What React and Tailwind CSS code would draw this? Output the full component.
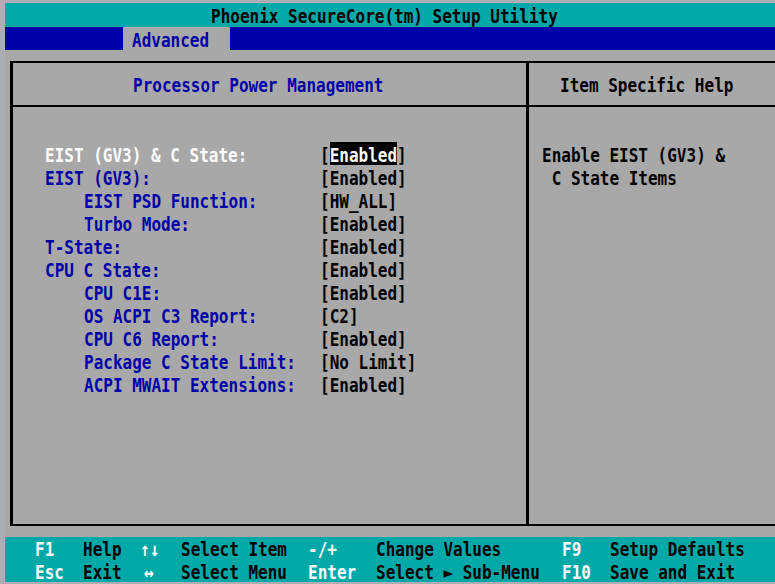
import React from 'react';

const items = [
  { label: 'EIST (GV3) & C State:', value: 'Enabled', sub: false, selected: true },
  { label: 'EIST (GV3):', value: 'Enabled', sub: false },
  { label: 'EIST PSD Function:', value: 'HW_ALL', sub: true },
  { label: 'Turbo Mode:', value: 'Enabled', sub: true },
  { label: 'T-State:', value: 'Enabled', sub: false },
  { label: 'CPU C State:', value: 'Enabled', sub: false },
  { label: 'CPU C1E:', value: 'Enabled', sub: true },
  { label: 'OS ACPI C3 Report:', value: 'C2', sub: true },
  { label: 'CPU C6 Report:', value: 'Enabled', sub: true },
  { label: 'Package C State Limit:', value: 'No Limit', sub: true },
  { label: 'ACPI MWAIT Extensions:', value: 'Enabled', sub: true },
];

// text cell, stretched vertically like the VGA text mode font
function T({ children, className = '' }) {
  return (
    <span className={`inline-block whitespace-pre scale-y-[1.2] translate-y-[2px] ${className}`}>{children}</span>
  );
}

function SettingRow({ label, value, sub, selected }) {
  return (
    <div className="flex h-[23px] items-center">
      <div className={`w-[275px] shrink-0 ${sub ? 'pl-[39px]' : ''}`}>
        <T className={selected ? 'text-[#fcfcfc]' : 'text-[#0000a8]'}>{label}</T>
      </div>
      <div className="flex h-full items-center text-black">
        <T>[</T>
        <span className={`flex h-full items-center ${selected ? 'bg-black text-[#fcfcfc]' : ''}`}>
          <T>{value}</T>
        </span>
        <T>]</T>
      </div>
    </div>
  );
}

function KeyRow({ cells }) {
  const widths = ['w-[48px]', 'w-[57px]', 'w-[41px]', 'w-[127px]', 'w-[68px]', 'w-[186px]', 'w-[48px]', 'flex-1'];
  return (
    <div className="flex h-[22.5px] items-center pl-[30px]">
      {cells.map((c, i) => (
        <div key={i} className={`${widths[i]} shrink-0 ${i % 2 === 0 ? 'text-[#fcfcfc]' : 'text-black'}`}>
          <T className={c.pad ? 'pl-[4px]' : ''}>{c.t}</T>
        </div>
      ))}
    </div>
  );
}

export default function App() {
  return (
    <div
      className="w-[775px] h-[584px] bg-[#abaeb4] pl-[5px] pt-[3px] pb-[2px] flex flex-col text-[16px] font-bold leading-none overflow-hidden"
      style={{ fontFamily: '"DejaVu Sans Mono", "Liberation Mono", monospace' }}
    >
      {/* title */}
      <div className="h-[24px] bg-[#00a8a8] flex items-center pl-[206px] text-black">
        <T>Phoenix SecureCore(tm) Setup Utility</T>
      </div>

      {/* menu bar */}
      <div className="h-[23px] bg-[#0000a8] flex">
        <div className="w-[118px]" />
        <div className="w-[107px] bg-[#a8a8a8] flex items-center pl-[9px] text-[#0000a8]">
          <T>Advanced</T>
        </div>
      </div>

      {/* main area */}
      <div className="flex-1 bg-[#a8a8a8] pt-[11px] pl-[5px]">
        <div className="h-[465px] border-l-[3px] border-t-2 border-b-2 border-black flex">
          <div className="w-[513px] flex flex-col">
            <div className="h-[44px] border-b-2 border-black flex items-center pl-[120px] text-[#0000a8]">
              <T>Processor Power Management</T>
            </div>
            <div className="pt-[35px] pl-[32px]">
              {items.map((it) => (
                <SettingRow key={it.label} {...it} />
              ))}
            </div>
          </div>
          <div className="w-[3px] bg-black" />
          <div className="flex-1 flex flex-col text-black">
            <div className="h-[44px] border-b-2 border-black flex items-center pl-[31px]">
              <T>Item Specific Help</T>
            </div>
            <div className="pt-[35px] pl-[13px]">
              <div className="h-[23px] flex items-center"><T>Enable EIST (GV3) &</T></div>
              <div className="h-[23px] flex items-center"><T> C State Items</T></div>
            </div>
          </div>
        </div>
      </div>

      {/* key legend */}
      <div className="h-[45px] bg-[#00a8a8]">
        <KeyRow
          cells={[
            { t: 'F1' }, { t: 'Help' }, { t: '↑↓' }, { t: 'Select Item' },
            { t: '-/+' }, { t: 'Change Values' }, { t: 'F9' }, { t: 'Setup Defaults' },
          ]}
        />
        <KeyRow
          cells={[
            { t: 'Esc' }, { t: 'Exit' }, { t: '↔', pad: true }, { t: 'Select Menu' },
            { t: 'Enter' }, { t: 'Select ► Sub-Menu' }, { t: 'F10' }, { t: 'Save and Exit' },
          ]}
        />
      </div>
    </div>
  );
}
